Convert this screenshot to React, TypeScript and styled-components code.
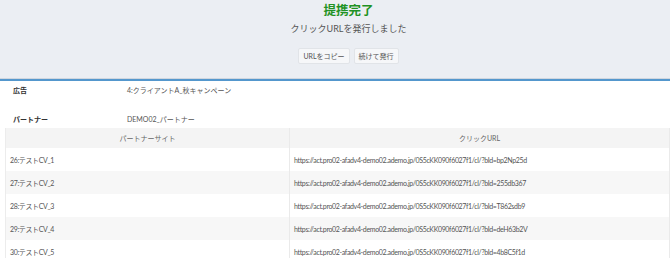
import styled, {createGlobalStyle} from 'styled-components'

const GlobalStyle = createGlobalStyle`
  html, body {
    margin: 0;
    padding: 0;
    background: #fff;
  }
  body {
    font-family: Lato, "Noto Sans CJK JP", sans-serif;
    color: #444;
  }
`

const Banner = styled.div`
  background: #ebeef3;
  height: 78px;
  padding-left: 27px;
  display: flex;
  flex-direction: column;
  align-items: center;
  border-bottom: 1px solid #cfd6df;
`

const Title = styled.h1`
  margin: 2px 0 0;
  font-size: 12.5px;
  line-height: 17px;
  font-weight: 700;
  color: #1f9224;
`

const Message = styled.p`
  margin: 3px 0 0;
  font-size: 9px;
  line-height: 14px;
  color: #555;
`

const ButtonRow = styled.div`
  display: flex;
  gap: 4px;
  margin-top: 12px;
`

const Button = styled.button`
  font-family: inherit;
  font-size: 7px;
  height: 16px;
  padding: 0 4px;
  background: #f6f7f9;
  border: 1px solid #e1e4e8;
  border-radius: 2px;
  color: #555;
`

const Card = styled.div`
  border-top: 2px solid #5497cd;
  padding: 0 0 0 5px;
`

const InfoRow = styled.div<{$height: number}>`
  display: grid;
  grid-template-columns: 122px 1fr;
  box-sizing: border-box;
  height: ${p => p.$height}px;
  align-items: start;
  padding-top: 4px;
  font-size: 7px;
  line-height: 10px;
`

const Label = styled.div`
  padding-left: 8px;
  font-weight: 700;
  color: #333;
`

const Value = styled.div`
  color: #555;
`

const Table = styled.table`
  width: 100%;
  border-collapse: collapse;
  font-size: 7px;
  border-left: 1px solid #ececec;
`

const Th = styled.th`
  background: #f4f4f4;
  height: 20px;
  font-weight: 400;
  color: #666;
  text-align: center;
  border-right: 1px solid #eaeaea;
  padding: 0;
`

const Tr = styled.tr<{$shade: boolean}>`
  background: ${p => (p.$shade ? '#f7f7f7' : '#fff')};
`

const Td = styled.td`
  height: 23px;
  padding: 0 0 0 4px;
  color: #555;
  letter-spacing: -0.35px;
  border-right: 1px solid #eaeaea;
  vertical-align: middle;
`

const rows = [
  {site: '26:テストCV_1', code: 'bp2Np25d'},
  {site: '27:テストCV_2', code: '255db367'},
  {site: '28:テストCV_3', code: 'T862sdb9'},
  {site: '29:テストCV_4', code: 'deH63b2V'},
  {site: '30:テストCV_5', code: '4b8C5f1d'},
]

function App() {
  return (
    <>
      <GlobalStyle />
      <Banner>
        <Title>提携完了</Title>
        <Message>クリックURLを発行しました</Message>
        <ButtonRow>
          <Button>URLをコピー</Button>
          <Button>続けて発行</Button>
        </ButtonRow>
      </Banner>
      <Card>
        <InfoRow $height={29}>
          <Label>広告</Label>
          <Value>4:クライアントA_秋キャンペーン</Value>
        </InfoRow>
        <InfoRow $height={18}>
          <Label>パートナー</Label>
          <Value>DEMO02_パートナー</Value>
        </InfoRow>
        <Table>
          <colgroup>
            <col style={{width: 284}} />
            <col />
          </colgroup>
          <thead>
            <tr>
              <Th>パートナーサイト</Th>
              <Th>クリックURL</Th>
            </tr>
          </thead>
          <tbody>
            {rows.map((r, i) => (
              <Tr key={r.site} $shade={i % 2 === 1}>
                <Td>{r.site}</Td>
                <Td>{`https://act.pro02-afadv4-demo02.ademo.jp/0S5cKK090f6027f1/cl/?bId=${r.code}`}</Td>
              </Tr>
            ))}
          </tbody>
        </Table>
      </Card>
    </>
  )
}

export default App
